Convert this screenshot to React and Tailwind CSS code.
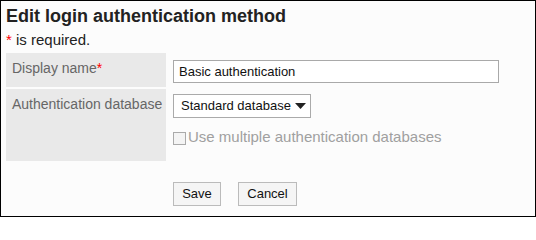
import React from 'react';

const font = { fontFamily: '"Liberation Sans", Arial, sans-serif' };

const App = () => {
  return (
    <div
      className="w-[536px] h-[217px] border border-black bg-[#fcfcfc] pl-[5px] pt-[4px] text-[#333] overflow-hidden"
      style={font}
    >
      <h1 className="text-[18px] leading-[22px] font-bold text-[#222]">Edit login authentication method</h1>
      <p className="mt-[4px] text-[15px] leading-[18px] text-[#222]">
        <span className="text-[#ff0000]">*</span> is required.
      </p>

      {/* Form rows */}
      <div className="mt-[4px] flex flex-col gap-[2px]">
        <div className="flex gap-[2px]">
          <div className="w-[160px] h-[34px] bg-[#e9e9e9] pl-[6px] pt-[7px] text-[14px] leading-[16px] text-[#666]">
            Display name<span className="text-[#ff0000]">*</span>
          </div>
          <div className="pl-[5px] pt-[6px]">
            <input
              type="text"
              defaultValue="Basic authentication"
              className="w-[326px] h-[23px] border border-[#a9a9a9] bg-white pl-[5px] text-[13px] text-[#111] outline-none"
              style={font}
            />
          </div>
        </div>

        <div className="flex gap-[2px]">
          <div className="w-[160px] h-[72px] bg-[#e9e9e9] pl-[6px] pt-[7px] text-[14px] leading-[16px] text-[#666]">
            Authentication database
          </div>
          <div className="pl-[5px] pt-[5px]">
            <div className="w-[138px] h-[24px] border border-[#aaa] bg-white pl-[7px] pr-[4px] flex items-center justify-between text-[13px] text-[#111]">
              <span>Standard database</span>
              <svg className="w-[11px] h-[6px]" viewBox="0 0 11 6">
                <path fill="#222" d="M0 0h11L5.5 6z" />
              </svg>
            </div>
            <label className="mt-[9px] flex items-start text-[15px] leading-[20px] text-[#a0a0a0]">
              <span className="mt-[5px] w-[13px] h-[13px] border border-[#aaa] bg-[#f4f4f4] mr-[2px] shrink-0" />
              Use multiple authentication databases
            </label>
          </div>
        </div>
      </div>

      {/* Buttons */}
      <div className="mt-[21px] ml-[167px] flex gap-[17px]">
        <button className="w-[48px] h-[24px] border border-[#bbb] bg-[#f5f5f5] text-[13px] text-[#111]" style={font}>
          Save
        </button>
        <button className="w-[59px] h-[24px] border border-[#bbb] bg-[#f5f5f5] text-[13px] text-[#111]" style={font}>
          Cancel
        </button>
      </div>
    </div>
  );
};

export default App;
